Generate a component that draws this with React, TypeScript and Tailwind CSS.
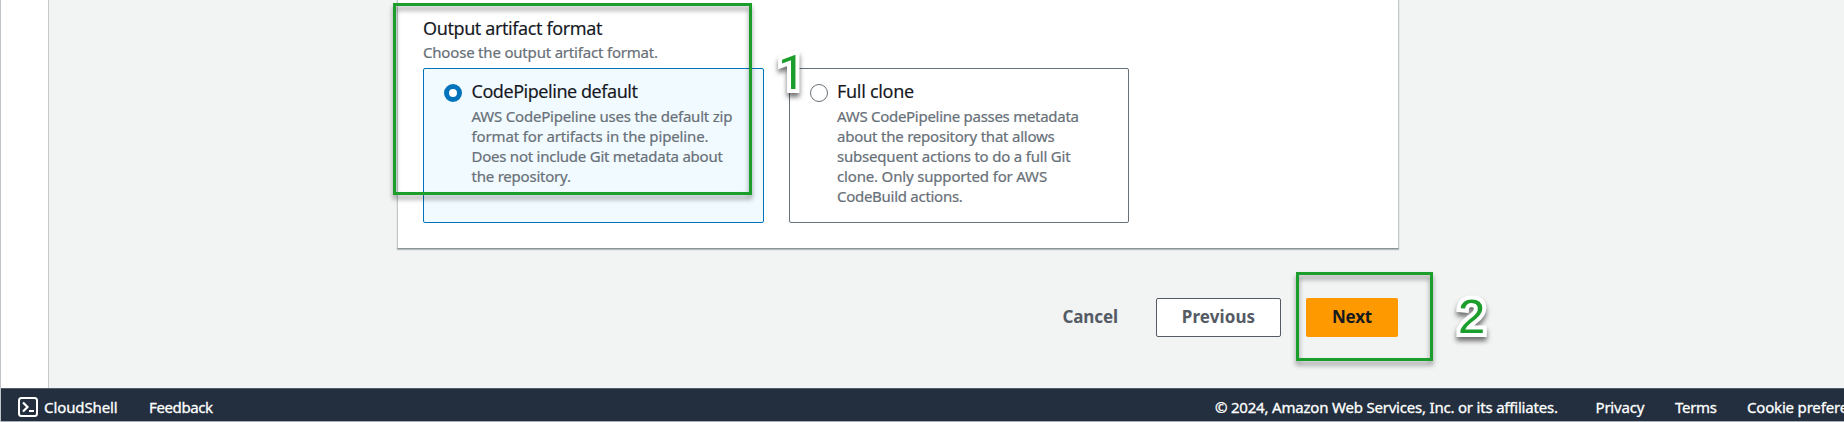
import type { ReactNode } from "react";

function Line({ t, children }: { t: string; children: ReactNode }) {
  return <span className={`block whitespace-nowrap ${t}`}>{children}</span>;
}

function Callout({ className }: { className: string }) {
  return (
    <div
      className={`pointer-events-none absolute border-[3px] border-[#1c9e2c] filter-[drop-shadow(0_4px_2.5px_rgba(0,0,0,0.42))] ${className}`}
    />
  );
}

function StepNumber({ className, children }: { className: string; children: ReactNode }) {
  return (
    <span
      className={`pointer-events-none absolute text-[49px] leading-[49px] text-[#1c9e2c] [paint-order:stroke_fill] [-webkit-text-stroke:8px_white] [stroke-linejoin:round] filter-[drop-shadow(0_4px_2.5px_rgba(0,0,0,0.55))] ${className}`}
    >
      {children}
    </span>
  );
}

function Tile({ checked, title, children }: { checked?: boolean; title: ReactNode; children: ReactNode }) {
  return (
    <label
      className={`flex h-[155px] rounded-[2px] border pt-[11px] pl-5 ${
        checked ? "w-[341px] gap-[9.5px] border-[#0073bb] bg-[#f1faff]" : "w-[340px] gap-[9px] border-[#687078] bg-white"
      }`}
    >
      <span
        className={`mt-1 block size-[18px] shrink-0 rounded-full bg-white ${
          checked ? "border-[5.5px] border-[#0073bb]" : "border-[1.5px] border-[#687078]"
        }`}
      />
      <span className="block">
        <span className="block text-[18px] leading-[22px] text-[#16191f] [-webkit-text-stroke:0.15px_currentColor]">{title}</span>
        <span className="mt-1 block text-[15px] leading-5 text-[#687078] [-webkit-text-stroke:0.2px_currentColor]">{children}</span>
      </span>
    </label>
  );
}

export default function App() {
  return (
    <div className="relative flex h-[422px] w-full flex-col overflow-hidden border-l border-[#bfc4c9] bg-[#f2f3f3] font-['Noto_Sans',sans-serif]">
      <div className="flex h-[388px] shrink-0">
        <aside className="w-12 shrink-0 border-r border-[#c5cbcd] bg-white" />
        <main className="ml-[348px] w-[1002px] shrink-0">
          <section className="h-[249px] border-x border-b border-x-[#c3c9ca] border-b-[#879596] bg-white pt-[17px] pl-[25px] shadow-[0_1px_1px_0_rgba(0,28,36,0.25)]">
            <h3 className="text-[18px] leading-[22px] text-[#16191f] [-webkit-text-stroke:0.15px_currentColor]">
              <Line t="tracking-[-0.4px]">Output artifact format</Line>
            </h3>
            <p className="mt-[3px] text-[15px] leading-5 text-[#687078] [-webkit-text-stroke:0.2px_currentColor]">
              <Line t="tracking-[-0.19px]">Choose the output artifact format.</Line>
            </p>
            <div className="mt-[6px] flex gap-[25px]">
              <Tile checked title={<Line t="tracking-[-0.46px]">CodePipeline default</Line>}>
                <Line t="tracking-[-0.2px]">AWS CodePipeline uses the default zip</Line>
                <Line t="tracking-[-0.14px]">format for artifacts in the pipeline.</Line>
                <Line t="tracking-[-0.24px]">Does not include Git metadata about</Line>
                <Line t="tracking-[-0.22px]">the repository.</Line>
              </Tile>
              <Tile title={<Line t="tracking-[-0.3px]">Full clone</Line>}>
                <Line t="tracking-[-0.28px]">AWS CodePipeline passes metadata</Line>
                <Line t="tracking-[-0.22px]">about the repository that allows</Line>
                <Line t="tracking-[-0.2px]">subsequent actions to do a full Git</Line>
                <Line t="tracking-[-0.17px]">clone. Only supported for AWS</Line>
                <Line t="tracking-[-0.28px]">CodeBuild actions.</Line>
              </Tile>
            </div>
          </section>
          <div className="mt-[49px] flex h-[39px] items-stretch justify-end pr-px text-[17px] font-bold">
            <button className="mr-[38px] flex items-center pb-px text-[#545b64]">
              <Line t="tracking-[-0.1px]">Cancel</Line>
            </button>
            <button className="mr-[25px] flex w-[125px] items-center justify-center rounded-[2px] border border-[#545b64] bg-white pb-px text-[#545b64]">
              <Line t="tracking-[0.1px]">Previous</Line>
            </button>
            <button className="flex w-[92px] items-center justify-center rounded-[2px] bg-[#ff9900] pb-px text-[#16191f]">
              <Line t="tracking-[-0.2px]">Next</Line>
            </button>
          </div>
        </main>
      </div>

      <footer className="flex h-[34px] shrink-0 items-start border-t border-b border-t-[#545b64] border-b-[#a9afb6] bg-[#232f3e] pt-2 text-[15px] leading-5 text-white [-webkit-text-stroke:0.3px_currentColor]">
        <svg className="ml-[17px] size-5 shrink-0" viewBox="0 0 20 20" fill="none" stroke="white" strokeWidth="2">
          <rect x="1" y="1" width="18" height="18" rx="2.5" />
          <path d="M5 5.5 L9.5 10 L5 14.5" strokeWidth="2.2" />
          <path d="M11 14 H16" />
        </svg>
        <a className="ml-[6px] w-[105px] shrink-0">
          <Line t="tracking-[-0.1px]">CloudShell</Line>
        </a>
        <a className="shrink-0">
          <Line t="tracking-[-0.38px]">Feedback</Line>
        </a>
        <div className="ml-auto flex w-[629px] shrink-0">
          <span className="w-[380.5px] shrink-0">
            <Line t="tracking-[-0.2px]">© 2024, Amazon Web Services, Inc. or its affiliates.</Line>
          </span>
          <a className="w-[79.5px] shrink-0">
            <Line t="tracking-[-0.2px]">Privacy</Line>
          </a>
          <a className="w-[72px] shrink-0">
            <Line t="tracking-[-0.3px]">Terms</Line>
          </a>
          <a className="shrink-0">
            <Line t="tracking-[-0.18px]">Cookie preferences</Line>
          </a>
        </div>
      </footer>

      <Callout className="top-[3px] left-[392px] h-[192px] w-[359px]" />
      <Callout className="top-[272px] left-[1295px] h-[89px] w-[137px]" />
      <StepNumber className="top-[48px] left-[777px] font-['Roboto',sans-serif]">1</StepNumber>
      <StepNumber className="top-[292px] left-[1457px] font-['Liberation_Sans',sans-serif]">2</StepNumber>
    </div>
  );
}
